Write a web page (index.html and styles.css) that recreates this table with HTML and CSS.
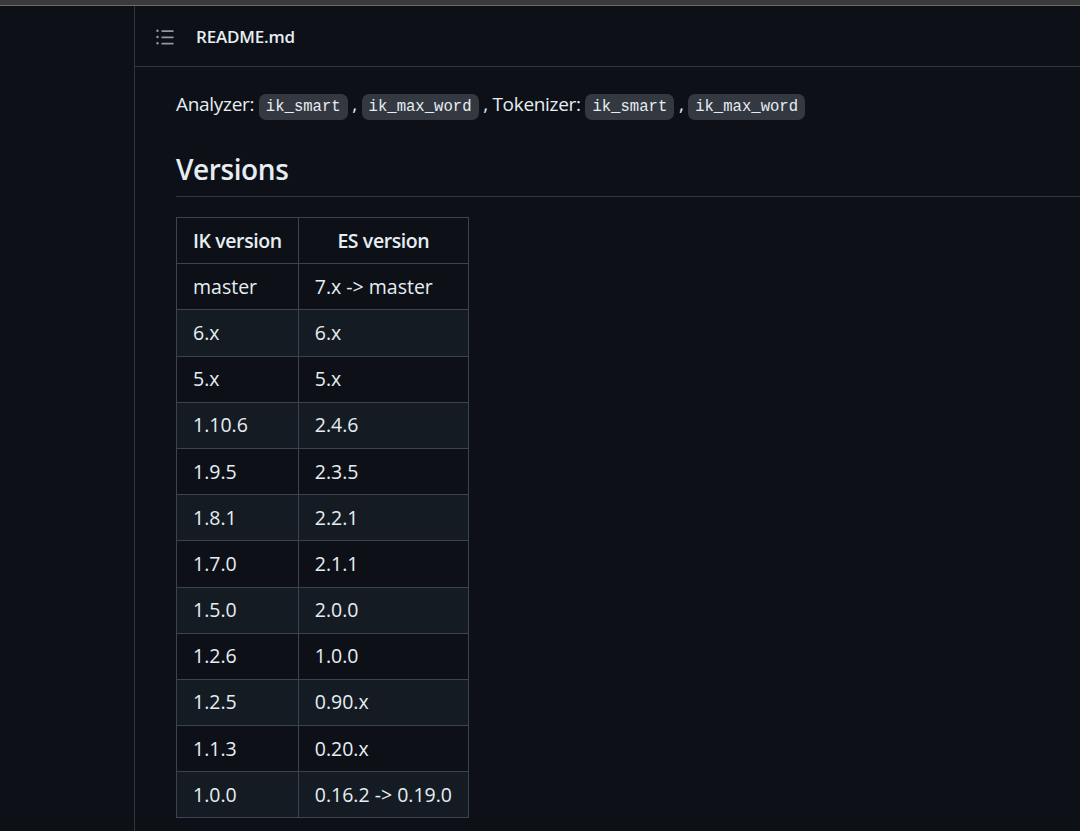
FILE: index.html
```html
<!DOCTYPE html>
<html>
<head>
<meta charset="utf-8">
<link rel="stylesheet" href="styles.css">
</head>
<body>
<div class="topbar"></div>
<div class="layout">
  <aside class="sidebar"></aside>
  <main class="main">
    <div class="file-header">
      <span class="toc-btn">
        <svg width="20" height="20" viewBox="0 0 16 16" fill="#9198a1"><path d="M5.75 2.5h8.5a.75.75 0 0 1 0 1.5h-8.5a.75.75 0 0 1 0-1.5Zm0 5h8.5a.75.75 0 0 1 0 1.5h-8.5a.75.75 0 0 1 0-1.5Zm0 5h8.5a.75.75 0 0 1 0 1.5h-8.5a.75.75 0 0 1 0-1.5ZM2 14a1 1 0 1 1 0-2 1 1 0 0 1 0 2Zm1-6a1 1 0 1 1-2 0 1 1 0 0 1 2 0ZM2 4a1 1 0 1 1 0-2 1 1 0 0 1 0 2Z"/></svg>
      </span>
      <span class="file-name">README.md</span>
    </div>
    <article class="markdown">
      <p>Analyzer: <code>ik_smart</code> , <code>ik_max_word</code> , Tokenizer: <code>ik_smart</code> , <code>ik_max_word</code></p>
      <h2>Versions</h2>
      <table>
        <thead>
          <tr><th>IK version</th><th>ES version</th></tr>
        </thead>
        <tbody>
          <tr><td>master</td><td>7.x -&gt; master</td></tr>
          <tr><td>6.x</td><td>6.x</td></tr>
          <tr><td>5.x</td><td>5.x</td></tr>
          <tr><td>1.10.6</td><td>2.4.6</td></tr>
          <tr><td>1.9.5</td><td>2.3.5</td></tr>
          <tr><td>1.8.1</td><td>2.2.1</td></tr>
          <tr><td>1.7.0</td><td>2.1.1</td></tr>
          <tr><td>1.5.0</td><td>2.0.0</td></tr>
          <tr><td>1.2.6</td><td>1.0.0</td></tr>
          <tr><td>1.2.5</td><td>0.90.x</td></tr>
          <tr><td>1.1.3</td><td>0.20.x</td></tr>
          <tr><td>1.0.0</td><td>0.16.2 -&gt; 0.19.0</td></tr>
        </tbody>
      </table>
    </article>
  </main>
</div>
</body>
</html>
```

FILE: styles.css
```css
html, body {
  margin: 0;
  padding: 0;
  background: #0d1117;
  color: #e6edf3;
  font-family: "Open Sans", "Noto Sans", sans-serif;
  height: 100%;
  overflow: hidden;
}

.topbar {
  height: 5px;
  background: #3b3b3b;
  border-bottom: 1px solid #6b6b6b;
}

.layout {
  display: flex;
  height: calc(100% - 6px);
}

.sidebar {
  width: 134px;
  flex: none;
  border-right: 1px solid #30363d;
}

.main {
  flex: 1;
  min-width: 0;
}

.file-header {
  height: 60px;
  border-bottom: 1px solid #30363d;
  display: flex;
  align-items: center;
  padding-left: 20px;
  gap: 21px;
}

.toc-btn {
  display: flex;
  align-items: center;
  width: 20px;
  height: 20px;
  margin-top: 1px;
}

.file-name {
  font-weight: 600;
  font-size: 17px;
  letter-spacing: -0.2px;
}

.markdown {
  padding: 22px 0 0 41px;
  font-size: 19px;
  line-height: 30px;
}

.markdown p {
  margin: 0 0 20px;
  letter-spacing: -0.3px;
}

code {
  font-family: "Liberation Mono", "DejaVu Sans Mono", monospace;
  font-size: 15.6px;
  letter-spacing: 0;
  background: #343941;
  border-radius: 7px;
  padding: 4px 7px;
}

.markdown h2 {
  margin: 29px 0 20px;
  font-size: 28px;
  font-weight: 600;
  line-height: 36px;
  padding-bottom: 9px;
  border-bottom: 1px solid #30363d;
  letter-spacing: -0.4px;
}

table {
  border-collapse: collapse;
  font-size: 19.5px;
}

th, td {
  border: 1px solid #3d444d;
  padding: 7.6px 16px;
  height: 30px;
  line-height: 30px;
}

th {
  font-weight: 600;
  text-align: center;
  letter-spacing: -0.4px;
}

td {
  text-align: left;
}

tbody tr:nth-child(2n) {
  background: #151b23;
}
```
